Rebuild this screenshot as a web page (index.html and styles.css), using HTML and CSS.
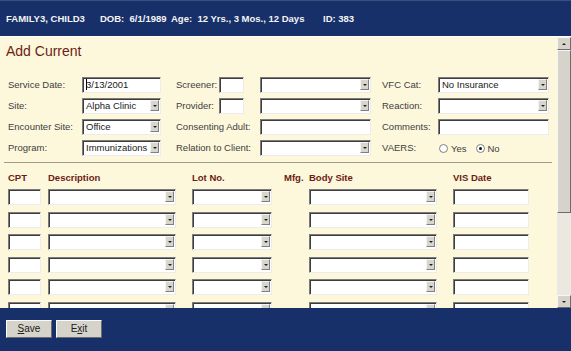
FILE: index.html
```html
<!DOCTYPE html>
<html>

<head>
    <meta charset="UTF-8">
    <title>Add Current</title>
    <link rel="stylesheet" href="styles.css">
</head>

<body>
    <div class="header">
        <span class="h-name">FAMILY3, CHILD3</span>
        <span class="h-dob">DOB:&nbsp; 6/1/1989</span>
        <span class="h-age">Age:&nbsp; 12 Yrs., 3 Mos., 12 Days</span>
        <span class="h-id">ID: 383</span>
    </div>

    <div class="main">
        <div class="panel">
            <div class="title">Add Current</div>

            <div class="form">
                <div class="lbl">Service Date:</div>
                <div class="cell"><div class="field w79"><span class="caret"></span>3/13/2001</div></div>
                <div class="cell pair"><span class="lbl">Screener:</span><div class="field w24"></div></div>
                <div class="cell"><div class="sel w111"><span class="val"></span><span class="btn"></span></div></div>
                <div class="lbl">VFC Cat:</div>
                <div class="cell"><div class="sel w111"><span class="val">No Insurance</span><span class="btn"></span></div></div>

                <div class="lbl">Site:</div>
                <div class="cell"><div class="sel w79"><span class="val">Alpha Clinic</span><span class="btn"></span></div></div>
                <div class="cell pair"><span class="lbl">Provider:</span><div class="field w24"></div></div>
                <div class="cell"><div class="sel w111"><span class="val"></span><span class="btn"></span></div></div>
                <div class="lbl">Reaction:</div>
                <div class="cell"><div class="sel w111"><span class="val"></span><span class="btn"></span></div></div>

                <div class="lbl">Encounter Site:</div>
                <div class="cell"><div class="sel w79"><span class="val">Office</span><span class="btn"></span></div></div>
                <div class="lbl">Consenting Adult:</div>
                <div class="cell"><div class="field w111"></div></div>
                <div class="lbl">Comments:</div>
                <div class="cell"><div class="field w111"></div></div>

                <div class="lbl">Program:</div>
                <div class="cell"><div class="sel w79"><span class="val">Immunizations</span><span class="btn"></span></div></div>
                <div class="lbl">Relation to Client:</div>
                <div class="cell"><div class="sel w111"><span class="val"></span><span class="btn"></span></div></div>
                <div class="lbl">VAERS:</div>
                <div class="cell radios">
                    <span class="radio"></span><span class="rlbl">Yes</span>
                    <span class="radio on"></span><span class="rlbl">No</span>
                </div>
            </div>

            <div class="sep"></div>

            <div class="grid">
                <div class="colh">CPT</div>
                <div class="colh">Description</div>
                <div class="colh">Lot No.</div>
                <div class="colh">Mfg.</div>
                <div class="colh">Body Site</div>
                <div class="colh">VIS Date</div>
            </div>
            <div class="grid rows" id="rows"></div>
        </div>

        <div class="scroll">
            <div class="sb-btn"><span class="up"></span></div>
            <div class="sb-thumb"></div>
            <div class="sb-track"></div>
            <div class="sb-btn"><span class="down"></span></div>
        </div>
    </div>

    <div class="footer">
        <div class="button"><u>S</u>ave</div>
        <div class="button">E<u>x</u>it</div>
    </div>

    <script>
        // build the six empty entry rows
        var rows = document.getElementById('rows');
        for (var i = 0; i < 6; i++) {
            rows.innerHTML +=
                '<div><div class="field w32"></div></div>' +
                '<div><div class="sel w128"><span class="val"></span><span class="btn"></span></div></div>' +
                '<div><div class="sel w80"><span class="val"></span><span class="btn"></span></div></div>' +
                '<div></div>' +
                '<div><div class="sel w128"><span class="val"></span><span class="btn"></span></div></div>' +
                '<div><div class="field w76"></div></div>';
        }
    </script>
</body>

</html>
```

FILE: styles.css
```css
body {
    margin: 0;
    width: 571px;
    height: 351px;
    overflow: hidden;
    font-family: "Liberation Sans", Arial, sans-serif;
    background-color: #17306a;
}

/* top patient bar */
.header {
    height: 36px;
    display: flex;
    align-items: center;
    padding-left: 6px;
    color: #f4f4f4;
    font-size: 9.5px;
    font-weight: bold;
    background-color: #17306a;
    border-top: 1px solid #3a4f80;
    box-sizing: border-box;
}

.h-name {
    width: 94px;
}

.h-dob {
    width: 71px;
}

.h-age {
    width: 152px;
}

.main {
    display: flex;
    height: 272px;
    background-color: #fdf7dc;
}

.panel {
    flex: 1;
    overflow: hidden;
    border-top: 1px solid #fff;
}

.title {
    color: #6b1d12;
    font-size: 14px;
    height: 16px;
    line-height: 16px;
    padding: 6px 0 0 6px;
}

.form {
    display: grid;
    grid-template-columns: 74px 94px 84px 122px 56px 111px;
    grid-auto-rows: 16px;
    row-gap: 5px;
    padding-left: 8px;
    margin-top: 18px;
}

.lbl {
    color: #404040;
    font-size: 9.5px;
    line-height: 16px;
    white-space: nowrap;
}

.cell {
    display: flex;
    align-items: center;
}

.pair {
    gap: 0;
}

.pair .lbl {
    width: 43px;
}

/* sunken text box */
.field,
.sel {
    height: 16px;
    box-sizing: border-box;
    background-color: #fff;
    border: 1px solid;
    border-color: #7c7c7c #ececec #ececec #7c7c7c;
    box-shadow: inset 1px 1px 0 #3c3c3c;
    font-size: 9.5px;
    color: #202020;
    line-height: 14px;
    padding-left: 3px;
    white-space: nowrap;
    overflow: hidden;
}

.sel {
    display: flex;
    padding-right: 1px;
}

.sel .val {
    flex: 1;
}

.sel .btn {
    width: 9px;
    height: 11px;
    margin-top: 1px;
    background-color: #d8d6cc;
    border: 1px solid;
    border-color: #f4f4f4 #808080 #808080 #f4f4f4;
    box-sizing: border-box;
    position: relative;
}

.sel .btn::after {
    content: "";
    position: absolute;
    left: 2px;
    top: 4px;
    border-left: 2px solid transparent;
    border-right: 2px solid transparent;
    border-top: 2px solid #202020;
}

.caret {
    display: inline-block;
    width: 1px;
    height: 11px;
    margin-right: -1px;
    vertical-align: -2px;
    background-color: #000;
}

.w24 { width: 25px; }
.w32 { width: 33px; }
.w76 { width: 76px; }
.w79 { width: 79px; }
.w80 { width: 80px; }
.w111 { width: 111px; }
.w128 { width: 128px; }

.radios {
    font-size: 9.5px;
    color: #404040;
    padding-left: 1px;
}

.radio {
    width: 7px;
    height: 7px;
    border-radius: 50%;
    border: 1px solid #808080;
    background-color: #fff;
    position: relative;
    margin-right: 3px;
}

.radio.on::after {
    content: "";
    position: absolute;
    left: 2px;
    top: 2px;
    width: 3px;
    height: 3px;
    border-radius: 50%;
    background-color: #111;
}

.rlbl {
    margin-right: 9px;
}

.sep {
    margin: 6px 5px 0 4px;
    border-top: 1px solid #a09c8c;
}

.grid {
    display: grid;
    grid-template-columns: 40px 144px 92px 25px 144px 76px;
    padding-left: 8px;
}

.colh {
    color: #6b1d12;
    font-size: 9.5px;
    font-weight: bold;
    height: 12px;
    line-height: 12px;
    margin-top: 9px;
}

.rows {
    grid-auto-rows: 16px;
    row-gap: 6.6px;
    margin-top: 5px;
}

/* fake classic scrollbar */
.scroll {
    width: 14px;
    display: flex;
    flex-direction: column;
    background-color: #ebe8e0;
    border-top: 1px solid #fff;
}

.sb-btn,
.sb-thumb {
    background-color: #d6d3ca;
    border: 1px solid;
    border-color: #f6f6f6 #6c6c6c #6c6c6c #f6f6f6;
    box-sizing: border-box;
}

.sb-btn {
    height: 13px;
    display: flex;
    align-items: center;
    justify-content: center;
}

.sb-thumb {
    height: 163px;
}

.sb-track {
    flex: 1;
}

.up {
    border-left: 2px solid transparent;
    border-right: 2px solid transparent;
    border-bottom: 2px solid #222;
}

.down {
    border-left: 2px solid transparent;
    border-right: 2px solid transparent;
    border-top: 2px solid #222;
}

.footer {
    height: 43px;
    display: flex;
    align-items: flex-start;
    gap: 4px;
    padding: 12px 0 0 6px;
    box-sizing: border-box;
    background-color: #17306a;
}

.button {
    width: 46px;
    height: 18px;
    box-sizing: border-box;
    background-color: #d6d3ca;
    border: 1px solid;
    border-color: #fafafa #6c6c6c #6c6c6c #fafafa;
    font-size: 10px;
    color: #202020;
    text-align: center;
    line-height: 16px;
}
```
